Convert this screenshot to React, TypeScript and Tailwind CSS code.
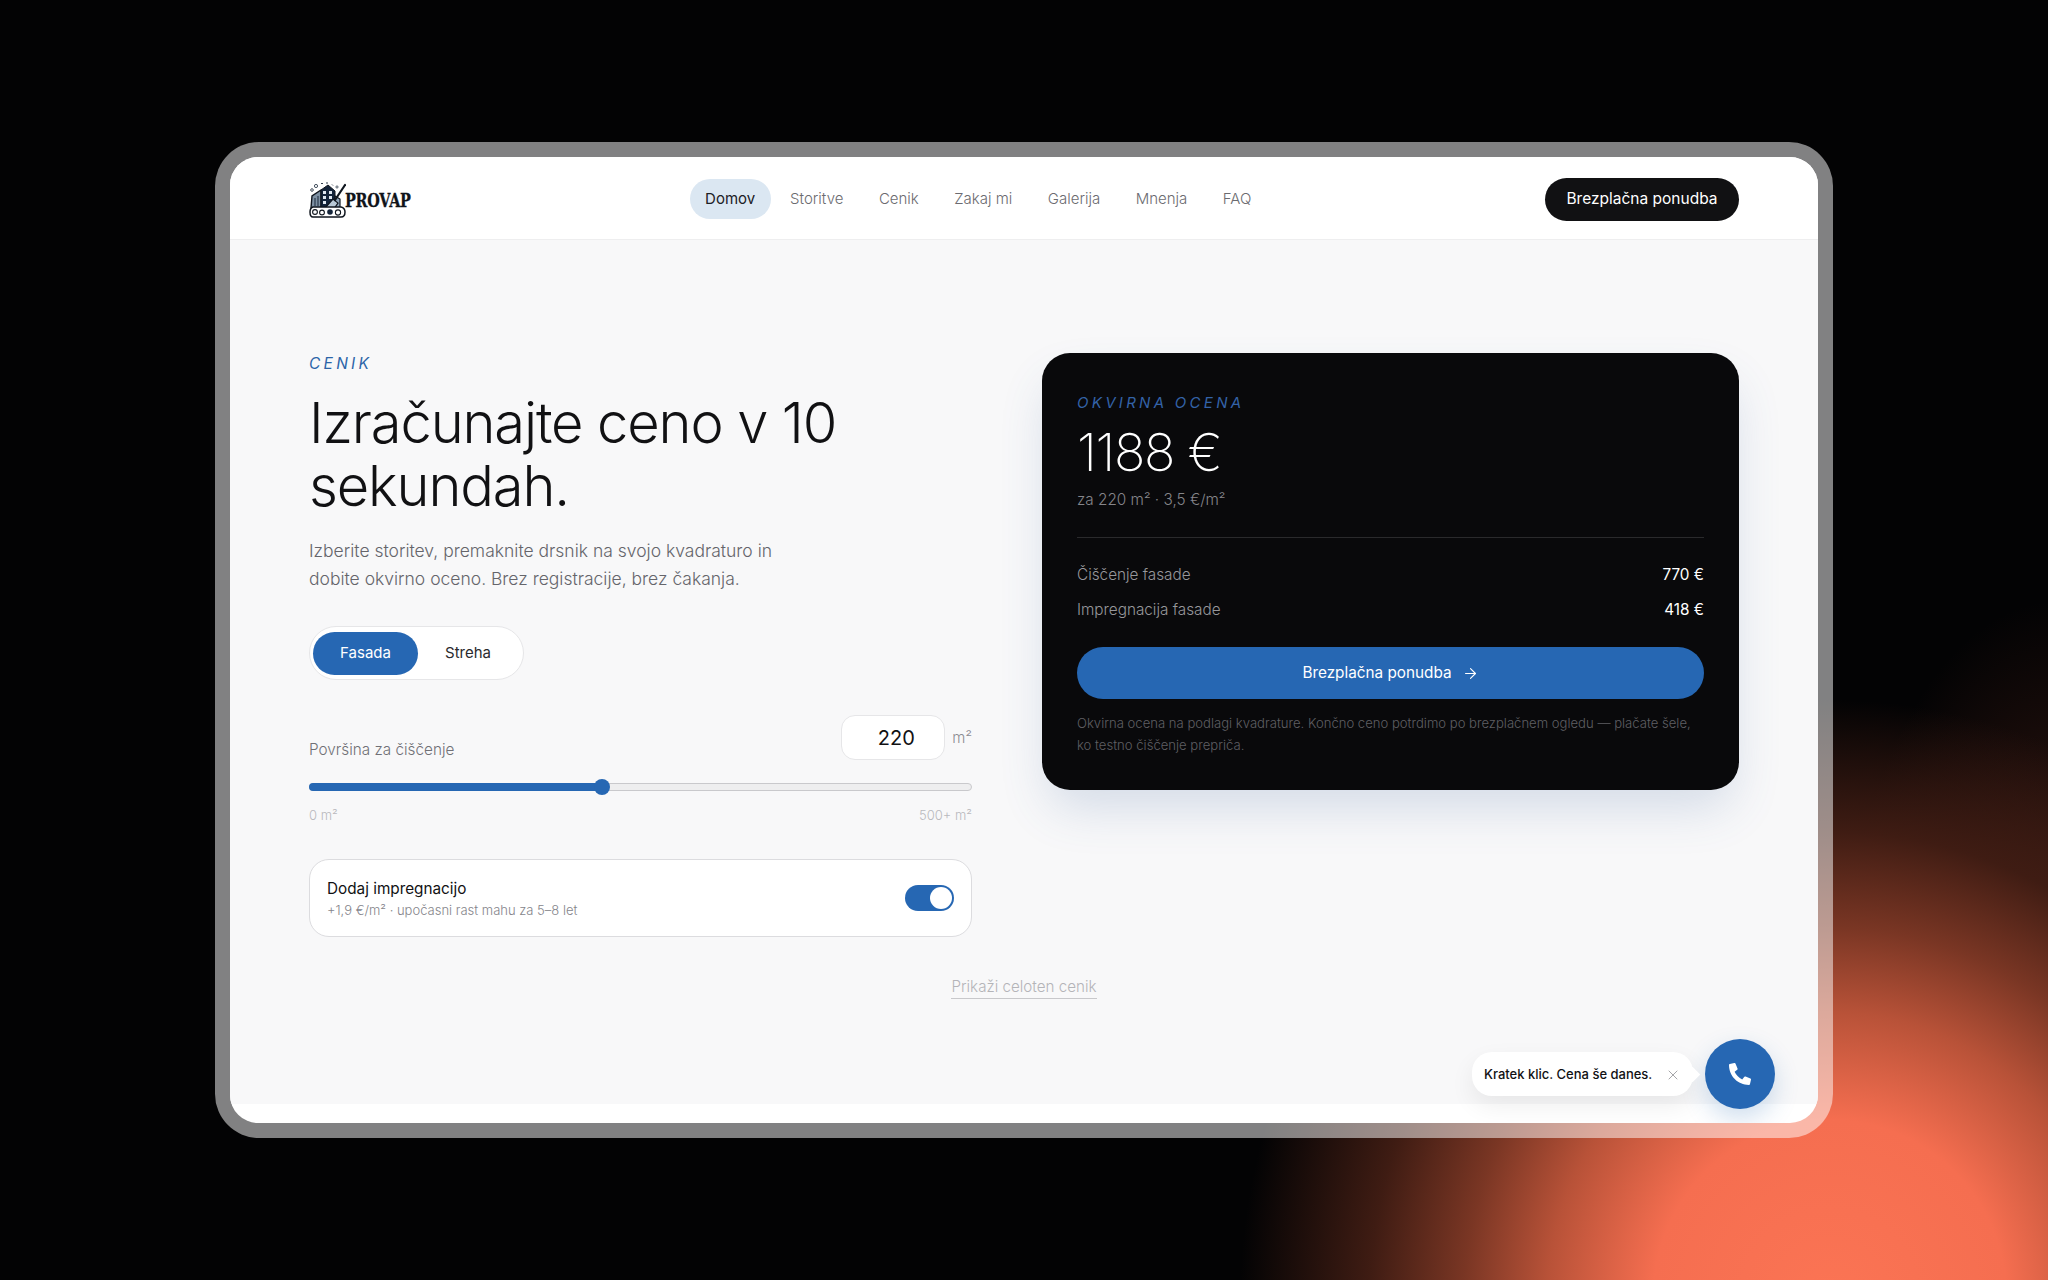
import React from "react";
import { FaPhoneAlt } from "react-icons/fa";
import { ArrowRight, X } from "lucide-react";

function Logo() {
  return (
    <div className="flex items-center">
      <svg width="37" height="37" viewBox="0 0 37 37" fill="none" className="shrink-0">
        <path d="M2 27 L3 15 L12 9 L12 29 Z" fill="#7d90a3" stroke="#10161f" strokeWidth="1.4" />
        <path d="M6 17v8M9 15v10" stroke="#2b3a4c" strokeWidth="1.2" />
        <path d="M12 9 L19 4 L26 10 L26 29 L12 29 Z" fill="#14243a" stroke="#10161f" strokeWidth="1" />
        <path d="M14 10h3v3h-3zM20 10h3v3h-3zM14 15h3v3h-3zM20 15h3v3h-3zM14 20h3v3h-3z" fill="#dfe7ef" />
        <path d="M26 15 L31 18 L31 29 L26 29 Z" fill="#8fa4b8" stroke="#10161f" strokeWidth="1.2" />
        <path d="M16 27 L24 18 L29 22 L24 29 Z" fill="#b8c8d6" stroke="#10161f" strokeWidth="1.2" />
        <path d="M26 19 L36 4" stroke="#10161f" strokeWidth="2.2" strokeLinecap="round" />
        <path d="M4 26 H32 Q36 27 36 31 Q36 36 32 36 H4 Q1 36 1 31 Q1 27 4 26 Z" fill="#fff" stroke="#10161f" strokeWidth="1.5" />
        <circle cx="6" cy="31" r="2.4" fill="#fff" stroke="#10161f" strokeWidth="1.1" />
        <circle cx="13" cy="31.5" r="2.4" fill="#fff" stroke="#10161f" strokeWidth="1.1" />
        <circle cx="21" cy="31" r="2.8" fill="#14243a" />
        <circle cx="29" cy="31.5" r="2.6" fill="#fff" stroke="#10161f" strokeWidth="1.1" />
        <circle cx="3" cy="9" r="1.3" stroke="#33404f" strokeWidth="0.9" />
        <circle cx="7" cy="5" r="1.6" stroke="#33404f" strokeWidth="0.9" />
        <path d="M12 2.5h2M18 3v-2M23 3.5l1 1" stroke="#33404f" strokeWidth="1" />
        <circle cx="28" cy="6" r="1.1" stroke="#33404f" strokeWidth="0.8" />
      </svg>
      <span className="inline-block origin-left scale-x-[0.8] ml-[-1px] mt-[3px] text-[18px] leading-none font-bold text-[#10141a] tracking-[-0.3px] [-webkit-text-stroke:0.3px_#10141a] [font-family:'DejaVu_Serif',serif]">
        PROVAP
      </span>
    </div>
  );
}

const navItems = ["Storitve", "Cenik", "Zakaj mi", "Galerija", "Mnenja", "FAQ"];

function Header() {
  return (
    <header className="h-[83px] shrink-0 flex items-center justify-between px-[79px] pt-[2px] bg-white border-b border-[#eeeeef]">
      <div className="w-[130px]">
        <Logo />
      </div>
      <nav className="flex items-center gap-[3.5px] ml-[-27px] text-[15px] text-[#6b6b70] font-light">
        <a className="h-[40px] w-[81px] flex items-center justify-center rounded-full bg-[#dbe7f2] text-[#1c2026] font-normal">Domov</a>
        {navItems.map((n) => (
          <a key={n} className="px-[16px] h-[40px] flex items-center">{n}</a>
        ))}
      </nav>
      <button className="h-[43px] w-[194px] rounded-full bg-[#111113] text-white text-[15.5px] font-normal">Brezplačna ponudba</button>
    </header>
  );
}

function LeftColumn() {
  return (
    <div>
      <p className="h-[20px] pt-px text-[15.5px] leading-[20px] italic tracking-[0.21em] font-normal text-[#2b64a8]">CENIK</p>
      <h1 className="mt-[19px] text-[56px] leading-[63px] font-light tracking-[-0.02em] text-[#111113]">Izračunajte ceno v 10<br />sekundah.</h1>
      <p className="mt-[19px] text-[17.5px] leading-[28px] font-light text-[#65656b]">
        Izberite storitev, premaknite drsnik na svojo kvadraturo in<br />dobite okvirno oceno. Brez registracije, brez čakanja.
      </p>
      <div className="mt-[33px] w-[215px] h-[54px] rounded-full bg-white border border-[#e6e6e8] flex items-center pl-[3px]">
        <span className="w-[105px] h-[43px] pt-px rounded-full bg-[#2667b3] text-white text-[15px] flex items-center justify-center">Fasada</span>
        <span className="w-[100px] pt-px text-center text-[15px] text-[#2a2a2e]">Streha</span>
      </div>
      <div className="mt-[35px] flex items-end justify-between">
        <span className="text-[15.3px] leading-[20px] font-light text-[#707076]">Površina za čiščenje</span>
        <div className="flex items-center gap-[7px]">
          <div className="w-[104px] h-[45px] rounded-[14px] bg-white border border-[#e6e6e8] flex items-center justify-center text-[20px] text-[#111113] pl-[6px]">220</div>
          <span className="pt-[2px] text-[15px] font-light text-[#8c8c92]">m²</span>
        </div>
      </div>
      <div className="mt-[23px] relative h-[8px] rounded-full bg-[#eeeeef] border border-[#c9c9cc]">
        <div className="absolute left-[-1px] top-[-1px] h-[8px] w-[293px] rounded-full bg-[#2667b3]" />
        <div className="absolute left-[284px] top-[-5px] w-[16px] h-[16px] rounded-full bg-[#2667b3]" />
      </div>
      <div className="mt-[16px] flex justify-between text-[13px] leading-[16px] font-light text-[#b9b9bd]">
        <span>0 m²</span>
        <span>500+ m²</span>
      </div>
      <div className="mt-[36px] h-[78px] rounded-[20px] bg-white border border-[#dcdcdf] flex items-center justify-between pl-[17px] pr-[17px]">
        <div className="pt-[2px]">
          <p className="text-[15.3px] leading-[20px] text-[#111113]">Dodaj impregnacijo</p>
          <p className="mt-[2px] text-[13px] leading-[18px] font-light text-[#85858b]">+1,9 €/m² · upočasni rast mahu za 5–8 let</p>
        </div>
        <div className="w-[49px] h-[26px] rounded-full bg-[#2667b3] relative">
          <div className="absolute right-[2px] top-[2px] w-[22px] h-[22px] rounded-full bg-white" />
        </div>
      </div>
    </div>
  );
}

function PriceCard() {
  return (
    <div className="rounded-[28px] bg-[#09090b] h-[437px] px-[35px] pt-[40px] shadow-[0_24px_50px_-8px_rgba(60,100,160,0.2)]">
      <p className="text-[15px] leading-[20px] italic tracking-[0.22em] font-normal text-[#3463a8]">OKVIRNA OCENA</p>
      <p className="mt-[9px] text-[52px] leading-[62px] font-[250] text-white tracking-[-0.025em]">1188 €</p>
      <p className="mt-[6px] text-[15.3px] leading-[20px] font-light text-[#85858a]">za 220 m² · 3,5 €/m²</p>
      <div className="mt-[27px] h-px bg-[#2a2a2c]" />
      <div className="mt-[27px] flex justify-between text-[15.3px] leading-[20px]">
        <span className="font-light text-[#97979b]">Čiščenje fasade</span>
        <span className="text-white">770 €</span>
      </div>
      <div className="mt-[15px] flex justify-between text-[15.3px] leading-[20px]">
        <span className="font-light text-[#97979b]">Impregnacija fasade</span>
        <span className="text-white">418 €</span>
      </div>
      <button className="mt-[27px] w-full h-[52px] rounded-full bg-[#2667b3] text-white text-[15.3px] flex items-center justify-center gap-[10px]">
        Brezplačna ponudba <ArrowRight size={17} strokeWidth={1.6} />
      </button>
      <p className="mt-[13px] text-[13.1px] leading-[22px] font-light text-[#5f5f63]">
        Okvirna ocena na podlagi kvadrature. Končno ceno potrdimo po brezplačnem ogledu — plačate šele,<br />ko testno čiščenje prepriča.
      </p>
    </div>
  );
}

function CallWidget() {
  return (
    <div className="absolute right-[43px] bottom-[14px] flex items-center gap-[12px]">
      <div className="relative h-[44px] w-[221px] rounded-[20px] bg-white shadow-[0_10px_24px_rgba(0,0,0,0.07)] flex items-center pl-[12px] pt-[2px] text-[13px] font-medium text-[#111113]">
        Kratek klic. Cena še danes.
        <X size={16} strokeWidth={1} className="absolute right-[12px] top-[15px] text-[#77777c]" />
        <div className="absolute right-[-5px] top-[17px] w-[11px] h-[11px] rotate-45 bg-white" />
      </div>
      <div className="w-[70px] h-[70px] rounded-full bg-[#2667b3] flex items-center justify-center shadow-[0_10px_24px_rgba(38,103,179,0.22)]">
        <FaPhoneAlt size={22} color="white" />
      </div>
    </div>
  );
}

export default function App() {
  return (
    <div className="relative w-[2048px] h-[1280px] overflow-hidden bg-[#030304] flex items-center justify-center [font-family:Inter,sans-serif]">
      <div className="absolute inset-0 bg-[radial-gradient(ellipse_590px_600px_at_1830px_1300px,#fb7454_0%,#f56e50_30%,#b85238_48%,#7a3624_62%,#3f1c13_78%,rgba(3,3,4,0)_100%),radial-gradient(ellipse_220px_420px_at_2060px_1020px,rgba(130,55,38,0.5)_0%,rgba(3,3,4,0)_100%)]" />
      <div className="relative w-[1618px] h-[996px] rounded-[44px] bg-white/50 p-[15px]">
        <div className="relative w-full h-full rounded-[28px] bg-white overflow-hidden flex flex-col">
          <Header />
          <main className="h-[864px] bg-[#f8f8f9] px-[79px] pt-[113px]">
            <div className="grid grid-cols-[663px_697px] gap-x-[70px] items-start">
              <LeftColumn />
              <PriceCard />
            </div>
            <div className="mt-[40px] flex justify-center">
              <a className="text-[15.2px] leading-[20px] pb-px font-light text-[#b4b4b8] border-b border-[#c8c8cb]">Prikaži celoten cenik</a>
            </div>
          </main>
          <CallWidget />
        </div>
      </div>
    </div>
  );
}
